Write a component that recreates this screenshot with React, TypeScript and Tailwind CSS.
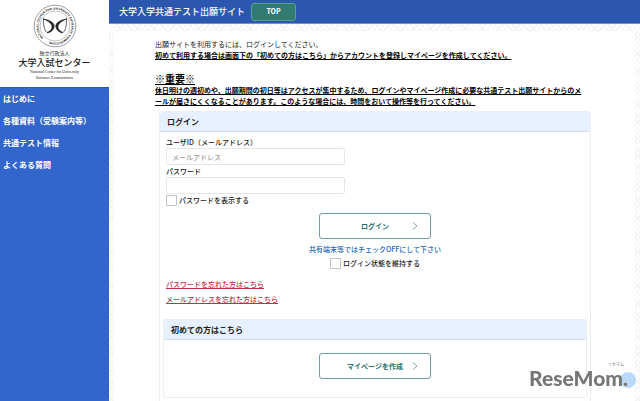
import type { ReactNode } from "react";

const navItems = ["はじめに", "各種資料（受験案内等）", "共通テスト情報", "よくある質問"];

function Seal() {
  return (
    <svg viewBox="0 0 44 44" className="h-11 w-11 overflow-visible" fill="none" role="img" aria-label="大学入試センター">
      <defs>
        <path id="ring" d="M10.300 33.700 A16.500 16.500 0 1 1 33.700 33.700 A16.500 16.500 0 0 1 10.300 33.700" />
      </defs>
      <circle cx="22" cy="22" r="20.800" stroke="#777" strokeWidth="0.7" />
      <circle cx="22" cy="22" r="15" stroke="#888" strokeWidth="0.5" />
      <text fontSize="3" fontWeight="700" fill="#222" fontFamily="Liberation Sans, sans-serif">
        <textPath href="#ring">NATIONAL CENTER FOR UNIVERSITY ENTRANCE EXAMINATIONS</textPath>
      </text>
      <g stroke="#222" strokeLinecap="round" strokeLinejoin="round">
        <path d="M10.500 15 C10.500 21 11 26 14 28.500 C16 29 18 28 19 26" strokeWidth="0.7" />
        <path d="M33.500 15 C33.500 21 33 26 30 28.500 C28 29 26 28 25 26" strokeWidth="0.7" />
        <path d="M10.500 15 C15 15.500 20.500 18 21.200 21.500 C21.500 25 18.500 28.500 14 28.500 C17.500 27 19.500 24.500 19 22 C18 18.500 14 16.500 10.500 15Z" fill="#222" strokeWidth="0.6" />
        <path d="M33.500 15 C29 15.500 23.500 18 22.800 21.500 C22.500 25 25.500 28.500 30 28.500 C26.500 27 24.500 24.500 25 22 C26 18.500 30 16.500 33.500 15Z" fill="#222" strokeWidth="0.6" />
      </g>
    </svg>
  );
}

function CardHeading({ children }: { children: ReactNode }) {
  return (
    <h2 className="h-5 rounded-t-xs border-b border-[#d5dfe9] bg-[#e6f0fe] px-[7px] text-[8px] leading-5 font-bold">
      {children}
    </h2>
  );
}

function OutlineButton({ children }: { children: ReactNode }) {
  return (
    <button
      type="button"
      className="relative mx-auto block h-[26px] w-28 rounded-[3px] border border-[#6f9fa3] bg-white text-center font-bold text-[#28716e]"
    >
      {children}
      <svg viewBox="0 0 6 8" className="absolute top-2 right-3 h-2 w-[6px]" fill="none" stroke="#5f9291" strokeWidth="0.8">
        <path d="M1 0.500 L5 4 L1 7.500" />
      </svg>
    </button>
  );
}

const boxClass = "h-[11px] w-[11px] shrink-0 appearance-none border border-[#c4c4c4] bg-white";
const inputClass =
  "block h-[17px] w-[179px] rounded-xs border border-[#e6e6e6] bg-white px-[5px] text-[7px] placeholder:text-[#a0a0a0]";

export default function App() {
  return (
    <div className="flex h-screen overflow-hidden bg-white font-['Noto_Sans_CJK_JP',sans-serif] text-[7px] leading-[11px] text-[#222]">
      <aside className="flex w-[109px] shrink-0 flex-col bg-[#3366cc]">
        <div className="flex h-[87px] flex-col items-center bg-white pt-1">
          <Seal />
          <p className="text-[5px] leading-[9px]">独立行政法人</p>
          <p className="text-[9px] leading-3 font-medium">大学入試センター</p>
          <p className="text-center font-['Liberation_Serif',serif] text-[4px] leading-[6px]">
            National Center for University
            <br />
            Entrance Examinations
          </p>
        </div>
        <nav className="border-t border-[#2d59b3] px-[3px] text-[8px] font-bold text-white">
          {navItems.map((item) => (
            <a key={item} href="#" className="block h-[22px] leading-[22px] whitespace-nowrap">
              {item}
            </a>
          ))}
        </nav>
      </aside>

      <div className="flex min-w-0 flex-1 flex-col">
        <header className="flex h-6 shrink-0 items-center gap-[6px] border-b border-[#7393c8] bg-[#2b57ae] px-[10px]">
          <h1 className="text-[9px] font-medium text-white">大学入学共通テスト出願サイト</h1>
          <a
            href="#"
            className="flex h-[18px] w-[45px] items-center justify-center rounded-[3px] border border-[#58a094] bg-[#317b70] text-[7px] font-bold text-white"
          >
            TOP
          </a>
        </header>

        <div className="flex-1 bg-[repeating-linear-gradient(45deg,#f3f3f3_0_1px,transparent_1px_4px),repeating-linear-gradient(-45deg,#f3f3f3_0_1px,transparent_1px_4px)] px-[5px] pt-[7px]">
          <main className="h-full bg-white pt-2 pr-[44px] pl-[41px]">
            <p>出願サイトを利用するには、ログインしてください。</p>
            <p className="font-bold text-black underline">
              初めて利用する場合は画面下の「初めての方はこちら」からアカウントを登録しマイページを作成してください。
            </p>
            <p className="pt-3 text-[10px] leading-3 font-bold text-black underline">※重要※</p>
            <p className="font-bold text-black underline">
              休日明けの週初めや、出願期間の初日等はアクセスが集中するため、ログインやマイページ作成に必要な共通テスト出願サイトからのメ
              <br />
              ールが届きにくくなることがあります。このような場合には、時間をおいて操作等を行ってください。
            </p>

            <section className="mt-1 ml-1 rounded-xs border border-[#eceff2]">
              <CardHeading>ログイン</CardHeading>
              <form className="px-[6px] pt-[5px] font-medium" onSubmit={(e) => e.preventDefault()}>
                <label htmlFor="user" className="block">
                  ユーザID（メールアドレス）
                </label>
                <input id="user" type="email" placeholder="メールアドレス" className={inputClass} />
                <label htmlFor="pass" className="block pt-px">
                  パスワード
                </label>
                <input id="pass" type="password" className={inputClass} />
                <label className="flex items-center gap-[2px] pt-px">
                  <input type="checkbox" className={boxClass} />
                  パスワードを表示する
                </label>
                <div className="pt-[7px]">
                  <OutlineButton>ログイン</OutlineButton>
                </div>
                <p className="pt-[5px] text-center text-[#1b65b8]">共有端末等ではチェックOFFにして下さい</p>
                <label className="flex items-center justify-center gap-[2px] pt-[3px]">
                  <input type="checkbox" className={boxClass} />
                  ログイン状態を維持する
                </label>
                <div className="flex flex-col items-start gap-1 pt-[10px] text-[#bd3047] underline">
                  <a href="#">パスワードを忘れた方はこちら</a>
                  <a href="#">メールアドレスを忘れた方はこちら</a>
                </div>
              </form>
              <section className="mx-[3px] mt-[14px] mb-1 rounded-xs border border-[#eceff2] pb-[18px]">
                <CardHeading>初めての方はこちら</CardHeading>
                <div className="pt-[13px]">
                  <OutlineButton>マイページを作成</OutlineButton>
                </div>
              </section>
            </section>
          </main>
        </div>
      </div>

      <div className="fixed right-1 bottom-3 flex w-[107px] flex-col">
        <span className="pr-3 text-right text-[4px] leading-[6px] text-[#777]">リセマム</span>
        <span className="absolute right-0 bottom-px h-4 w-4 rounded-full bg-[#bad8f8]" />
        <span className="relative font-['Lato',sans-serif] text-[21px] leading-[22px] font-black text-[#777]">
          ReseMom.
        </span>
      </div>
    </div>
  );
}
